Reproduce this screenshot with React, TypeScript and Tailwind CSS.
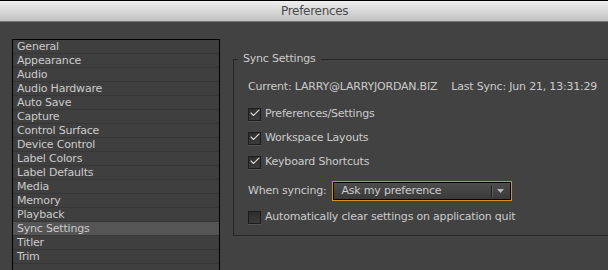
import { Check } from 'lucide-react'

const sections = [
  'General',
  'Appearance',
  'Audio',
  'Audio Hardware',
  'Auto Save',
  'Capture',
  'Control Surface',
  'Device Control',
  'Label Colors',
  'Label Defaults',
  'Media',
  'Memory',
  'Playback',
  'Sync Settings',
  'Titler',
  'Trim',
]

function CheckBox({ checked, label }: { checked: boolean; label: string }) {
  return (
    <div className="flex items-center h-[14px]">
      <div className="relative w-[13px] h-[13px] border border-[#1c1c1c] bg-gradient-to-b from-[#2e2e2e] to-[#3a3a3a] shadow-[0_1px_0_#555]">
        {checked && (
          <Check className="absolute -top-[2px] left-[0px] w-[12px] h-[12px] text-[#d6d6d6]" strokeWidth={2.2} />
        )}
      </div>
      <span className="ml-[4px]">{label}</span>
    </div>
  )
}

export default function App() {
  return (
    <div
      className="w-[608px] h-[270px] overflow-hidden bg-[#424242] text-[11px] text-[#cbcbcb] font-medium tracking-[-0.2px]"
      style={{ fontFamily: '"DejaVu Sans", "Liberation Sans", sans-serif' }}
    >
      {/* Title bar */}
      <div className="h-[22px] border-t border-black bg-gradient-to-b from-[#efefef] to-[#c2c2c2] border-b border-b-[#777] flex items-center">
        <span className="pl-[281px] text-[12px] text-[#4a4a4a] font-normal tracking-[-0.3px]">Preferences</span>
      </div>

      <div className="flex">
        {/* Section list */}
        <div className="shrink-0 ml-[12px] mt-[17px] w-[208px] h-[260px] border border-black bg-[#3f3f3f]">
          {sections.map((s) => (
            <div
              key={s}
              className={
                'h-[14px] leading-[14px] pl-[4px] border-b border-[#363636] ' +
                (s === 'Sync Settings' ? 'bg-[#555555]' : '')
              }
            >
              {s}
            </div>
          ))}
        </div>

        {/* Settings group */}
        <fieldset className="shrink-0 ml-[13px] mt-[30px] w-[400px] h-[184px] border border-[#262626] pl-[4px]">
          <legend className="px-[5px] leading-[14px]">Sync Settings</legend>
          <div className="pl-[10px] pt-[14px] flex flex-col">
            <div className="flex h-[14px] items-center">
              <span>Current: LARRY@LARRYJORDAN.BIZ</span>
              <span className="ml-[14px]">Last Sync: Jun 21, 13:31:29</span>
            </div>
            <div className="mt-[13px] flex flex-col gap-[10px]">
              <CheckBox checked label="Preferences/Settings" />
              <CheckBox checked label="Workspace Layouts" />
              <CheckBox checked label="Keyboard Shortcuts" />
            </div>
            <div className="mt-[12px] flex items-center">
              <span>When syncing:</span>
              <div className="ml-[6px] w-[180px] h-[20px] border border-[#cf951c] p-0">
                <div className="h-full border border-black bg-gradient-to-b from-[#4c4c4c] to-[#3a3a3a] flex items-center">
                  <span className="pl-[7px] flex-1">Ask my preference</span>
                  <div className="h-[12px] w-[2px] border-l border-[#222] border-r border-r-[#5a5a5a]" />
                  <svg width="16" height="10" viewBox="0 0 16 10" className="mr-[1px]">
                    <path d="M4 3 L11 3 L7.5 7 Z" fill="#b8b8b8" />
                  </svg>
                </div>
              </div>
            </div>
            <div className="mt-[9px]">
              <CheckBox checked={false} label="Automatically clear settings on application quit" />
            </div>
          </div>
        </fieldset>
      </div>
    </div>
  )
}
